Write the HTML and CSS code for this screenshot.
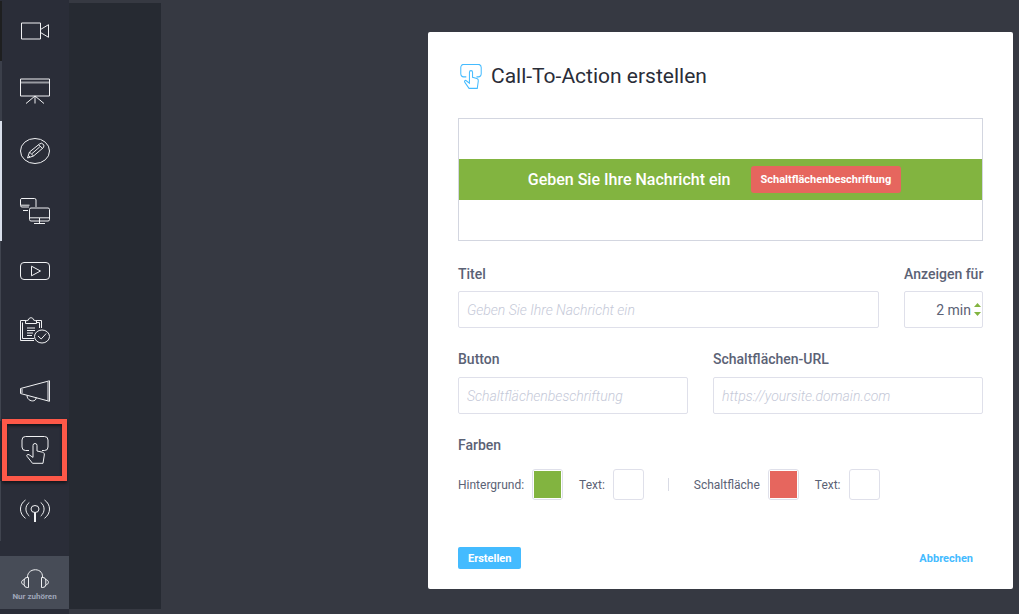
FILE: index.html
```html
<!DOCTYPE html>
<html lang="de">
<head>
<meta charset="utf-8">
<meta name="viewport" content="width=device-width, initial-scale=1">
<title>Call-To-Action erstellen</title>
<link rel="stylesheet" href="styles.css">
</head>
<body>
<svg class="defs" aria-hidden="true">
  <symbol id="tap" viewBox="0 0 28 28" preserveAspectRatio="none">
    <path d="M8 14.500H4.500a3.500 3.500 0 0 1-3.500-3.500V4a3.500 3.500 0 0 1 3.500-3.500h19A3.500 3.500 0 0 1 27 4v7a3.500 3.500 0 0 1-3.500 3.500H21"/>
    <path d="M12 19V9.500a2 2 0 0 1 4 0V15l5.500 1.200c1.500.4 2 1.300 1.800 2.800l-1.300 8.300H11.500L6 20.300c-.8-1.200.6-2.400 2-1.600l4 2.700V19"/>
  </symbol>
</svg>
<nav class="rail">
  <button class="tool tool-camera" aria-label="Kamera"><svg viewBox="0 0 30 30"><path d="M1.500 7h19v16h-19zM20.500 13.500l8-4.800v12.600l-8-4.800"/></svg></button>
  <button class="tool tool-near" aria-label="Präsentation"><svg viewBox="0 0 30 30"><path d="M.5 3h29v17H.500zM15 20v7.500M15 20l-9 7.500M15 20l9 7.500"/><path d="M1 6.500h28" class="soft"/></svg></button>
  <button class="tool tool-open" aria-label="Zeichnen"><svg viewBox="0 0 30 30"><ellipse cx="15" cy="15" rx="14.500" ry="12.500"/><path d="M7.500 22l2-6L19.500 8l2.200-.8 2.300 2-.5 2.300-10 8.500zM9.500 16l4 4M18.500 8.800l4 3.500M11.800 17.800l8-7M8.500 19.500l1.500 1.500"/></svg></button>
  <button class="tool tool-open" aria-label="Bildschirm teilen"><svg viewBox="0 0 30 30"><path d="M9 11H2a1.500 1.500 0 0 1-1.500-1.500v-6A1.500 1.500 0 0 1 2 2.500h12.500A1.500 1.500 0 0 1 16 4v7M1 9.200h8.500M3 14.500h5"/><rect x="9.500" y="12" width="20" height="13" rx="1.500"/><path d="M10 21.800h19M19.500 22v5.500M14 27.500h11"/></svg></button>
  <button class="tool" aria-label="Video"><svg viewBox="0 0 30 30"><rect x=".5" y="6.500" width="29" height="17" rx="3.500"/><path d="M11.500 10.200v9.600l9-4.800z"/></svg></button>
  <button class="tool" aria-label="Umfragen"><svg viewBox="0 0 30 30"><path d="M6 4.500H.500v20H14M2.500 6.500v16H14M16 4.500h5.500V12M16 6.500h3.500V12"/><path d="M5.500 7.500V5l3-1c0-3 5-3 5 0l3 1v2.500zM7 12h8M7 14.500h8M7 17h6M7 19.500h5"/><ellipse cx="22" cy="20.500" rx="7.500" ry="6.500"/><path d="M18 20l3.200 3 5-5.500"/></svg></button>
  <button class="tool" aria-label="Ankündigung"><svg viewBox="0 0 30 30"><path d="M.5 12.500v5l29 7.800V4.800zM2 13v4M7 19.500c0 6 9 7.500 9.300 2M28 6v18.500"/></svg></button>
  <button class="tool tool-cta" aria-label="Call-To-Action"><svg><use href="#tap"/></svg></button>
  <button class="tool" aria-label="Übertragung"><svg viewBox="0 0 30 30"><ellipse cx="15" cy="13" rx="4" ry="3.500"/><path d="M14.500 16.500V26M15.500 16.500V26M9.300 6.500c-4.500 3-4.500 10 0 13.500M20.700 6.500c4.500 3 4.500 10 0 13.500M5.500 4C-1.200 8.500-1.200 17.500 5.500 22.300M24.500 4c6.700 4.500 6.700 13.500 0 18.300"/></svg></button>
  <button class="listen"><svg viewBox="0 0 28 20"><path d="M6.500 8.500c-.5-10 15.500-10.500 15-.5M7.500 8.500v10H6.200A3 3 0 0 1 3.200 15.500V11A2.800 2.800 0 0 1 6 8.500zM20.500 8.500v10h1.300a3 3 0 0 0 3-3V11A2.800 2.800 0 0 0 22 8.500zM3.200 10.500c-3.500 1-3.500 4.500 0 5.500M24.800 10.500c3.500 1 3.500 4.500 0 5.500"/></svg>Nur zuhören</button>
</nav>
<aside class="panel"></aside>
<main class="stage">
  <form class="dialog">
    <h1 class="title"><svg aria-hidden="true"><use href="#tap"/></svg>Call-To-Action erstellen</h1>
    <section class="preview">
      <div class="banner"><span>Geben Sie Ihre Nachricht ein</span><button type="button" class="banner-button">Schaltflächenbeschriftung</button></div>
    </section>
    <div class="row row-title">
      <div class="field"><label for="headline">Titel</label><input id="headline" type="text" placeholder="Geben Sie Ihre Nachricht ein"></div>
      <div class="field"><label for="duration">Anzeigen für</label>
        <div class="duration"><input id="duration" type="text" value="2 min"><span class="spin"><button type="button" class="up" aria-label="Mehr"></button><button type="button" class="down" aria-label="Weniger"></button></span></div>
      </div>
    </div>
    <div class="row row-button">
      <div class="field"><label for="caption">Button</label><input id="caption" type="text" placeholder="Schaltflächenbeschriftung"></div>
      <div class="field"><label for="url">Schaltflächen-URL</label><input id="url" type="url" placeholder="https://yoursite.domain.com"></div>
    </div>
    <h2 class="subtitle">Farben</h2>
    <div class="colors">
      <label class="color">Hintergrund:<input type="color" value="#82b440"></label>
      <label class="color">Text:<input type="color" value="#ffffff"></label>
      <span class="divider"></span>
      <label class="color">Schaltfläche<input type="color" value="#e6665e"></label>
      <label class="color">Text:<input type="color" value="#ffffff"></label>
    </div>
    <div class="actions"><button type="button" class="create">Erstellen</button><button type="button" class="cancel">Abbrechen</button></div>
  </form>
</main>
</body>
</html>
```
FILE: styles.css
```css
* { box-sizing: border-box; }

body {
  display: flex;
  min-height: 100vh;
  margin: 0;
  background: #363942;
  color: #5b6275;
  font-family: Roboto, "Liberation Sans", sans-serif;
}

button, input { font-family: inherit; }
button { border: 0; cursor: pointer; }
svg { fill: none; stroke: currentColor; }
.defs { display: none; }

.rail {
  display: flex;
  flex-direction: column;
  flex: none;
  width: 69px;
  padding: 1px 0 5px;
  background: #2a2d38;
}

.tool {
  display: flex;
  align-items: center;
  justify-content: center;
  height: 60px;
  padding: 0;
  border-left: 1px solid #40444f;
  background: none;
  color: #f0f1f3;
}
.tool svg { width: 30px; height: 30px; }
.tool .soft { stroke: #989ba1; stroke-width: 2; }
.tool-camera, .tool-near, .tool-open { padding-right: 1px; border-left-width: 2px; }
.tool-camera { border-left-color: #1e1f20; }
.tool-near { border-left-color: #3b3f4a; }
.tool-open { border-left-color: #d9dfeb; }
.tool-cta {
  width: 65px;
  height: 62px;
  margin: -2px 0 0 2px;
  border: 5px solid #fd5848;
  box-shadow: 0 2px 3px #14161c, inset 0 2px 3px #14161c;
}
.tool-cta svg { width: 28px; height: 28px; }

.listen {
  display: flex;
  flex-direction: column;
  align-items: center;
  justify-content: center;
  gap: 4px;
  height: 53px;
  margin-top: auto;
  padding: 4px 0 0;
  background: #474c57;
  color: #9fa6b9;
  font-size: 8px;
  font-weight: 700;
  line-height: 8px;
}
.listen svg { width: 28px; height: 20px; color: #f0f1f3; }

.panel {
  flex: none;
  width: 92px;
  margin: 3px 0 5px;
  background: #262a32;
}

.stage { flex: 1; padding: 32px 6px 25px 267px; }

.dialog {
  padding: 30px 30px 20px;
  border-radius: 2px;
  background: #fff;
}

.title {
  display: flex;
  align-items: center;
  gap: 9px;
  margin: 0;
  padding-left: 2px;
  color: #2a2d38;
  font-size: 21px;
  font-weight: 400;
  line-height: 28px;
}
.title svg { width: 22px; height: 25px; color: #44bbff; stroke-width: 1.3; }

.preview {
  display: grid;
  align-items: center;
  height: 123px;
  margin-top: 28px;
  border: 1px solid #d3d6e0;
}
.banner {
  display: flex;
  align-items: center;
  justify-content: center;
  gap: 20px;
  height: 41px;
  padding-right: 12px;
  background: #82b440;
  color: #fff;
  font-size: 16px;
  font-weight: 500;
}
.banner-button {
  height: 27px;
  padding: 0 10px;
  border-radius: 3px;
  background: #e6665e;
  color: #fff;
  font-size: 11px;
  font-weight: 700;
}

.row { display: grid; column-gap: 25px; }
.row-title { grid-template-columns: 1fr 79px; margin-top: 24px; }
.row-button { grid-template-columns: 230fr 270fr; margin-top: 22px; }

.field { display: flex; flex-direction: column; gap: 8px; min-width: 0; }
.row-button .field { gap: 9px; }
.field label, .subtitle {
  margin: 0;
  font-size: 14px;
  font-weight: 500;
  line-height: 18px;
  white-space: nowrap;
}
.field input {
  width: 100%;
  height: 37px;
  padding: 0 8px;
  border: 1px solid #dfe0ea;
  border-radius: 2px;
  background: #fff;
  color: #5b6275;
  font-size: 14px;
}
.field input::placeholder {
  color: #c5c9d8;
  font-style: italic;
  font-weight: 300;
  opacity: 1;
}

.duration { position: relative; }
.field .duration input { padding: 0 11px 0 4px; text-align: right; }
.spin {
  position: absolute;
  top: 12px;
  right: 2px;
  display: grid;
  gap: 5px;
}
.spin button {
  width: 7px;
  height: 4px;
  padding: 0;
  background: #82b440;
}
.up { clip-path: polygon(50% 0, 100% 100%, 0 100%); }
.down { clip-path: polygon(0 0, 100% 0, 50% 100%); }

.subtitle { margin-top: 22px; }

.colors {
  display: flex;
  align-items: center;
  margin-top: 15px;
  font-size: 12px;
}
.color { display: flex; align-items: center; gap: 8px; margin-right: 16px; }
.color input {
  width: 31px;
  height: 31px;
  padding: 1px;
  border: 1px solid #dfe0ea;
  border-radius: 3px;
  appearance: none;
  background: #fff;
}
.color input::-webkit-color-swatch-wrapper { padding: 0; }
.color input::-webkit-color-swatch { border: 0; }
.divider {
  width: 1px;
  height: 13px;
  margin: 0 25px 0 8px;
  background: #d9dbe5;
}

.actions {
  display: flex;
  justify-content: space-between;
  margin-top: 47px;
}
.actions button {
  height: 22px;
  padding: 0 10px;
  border-radius: 2px;
  font-size: 11px;
  font-weight: 700;
}
.create { background: #44bbff; color: #fff; }
.cancel { background: none; color: #44bbff; }
```
